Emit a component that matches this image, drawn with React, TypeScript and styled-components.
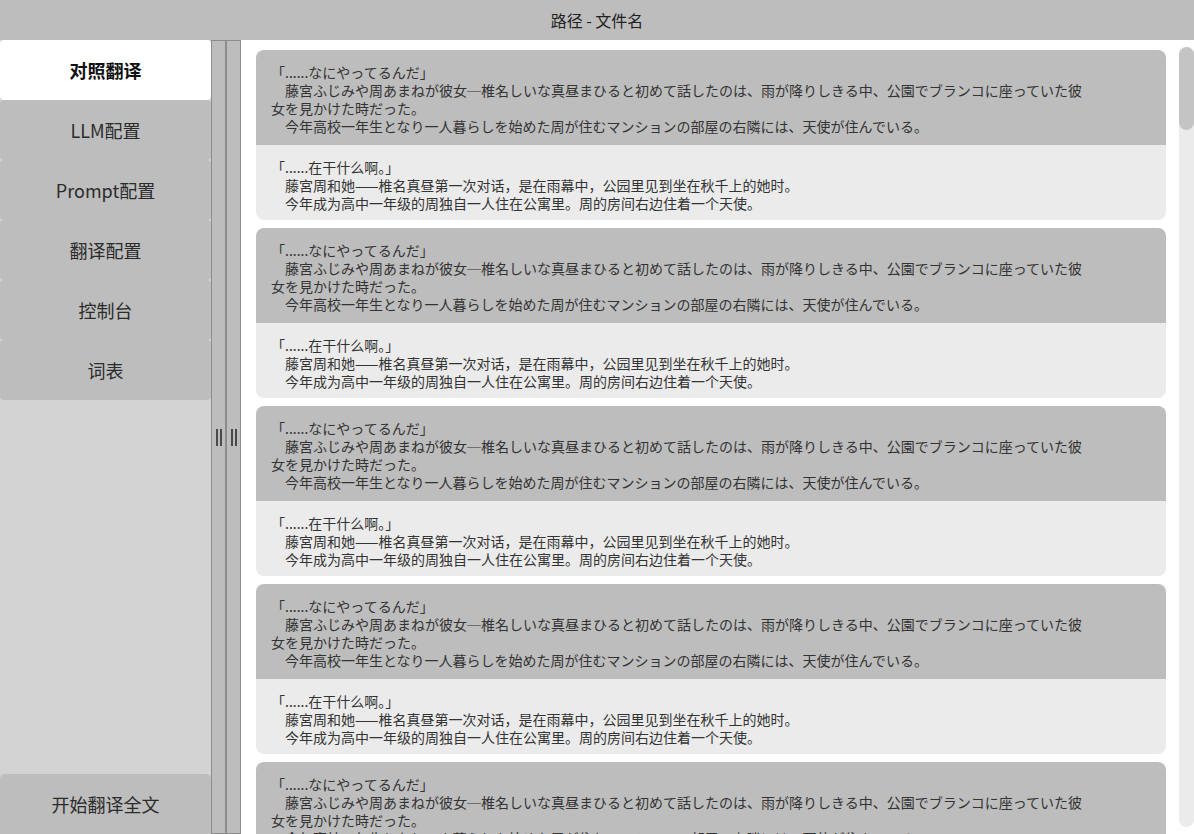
import React from "react";
import styled, { createGlobalStyle } from "styled-components";

const GlobalStyle = createGlobalStyle`
  html, body {
    margin: 0;
    padding: 0;
    height: 100%;
    overflow: hidden;
    background: #ffffff;
    font-family: "Noto Sans CJK SC", "Noto Sans CJK JP", "Noto Sans", sans-serif;
  }
  #root { height: 100%; }
  * { box-sizing: border-box; }
`;

const Shell = styled.div`
  height: 100vh;
  display: flex;
  flex-direction: column;
`;

const TitleBar = styled.header`
  height: 40px;
  flex: none;
  background: #bdbdbd;
  display: flex;
  align-items: center;
  justify-content: center;
  font-size: 16px;
  color: #222;
`;

const Body = styled.div`
  flex: 1;
  min-height: 0;
  display: flex;
`;

const Sidebar = styled.nav`
  width: 211px;
  flex: none;
  background: #d3d3d3;
  display: flex;
  flex-direction: column;
  justify-content: space-between;
`;

const NavList = styled.div`
  display: flex;
  flex-direction: column;
`;

const NavItem = styled.div<{ $active?: boolean }>`
  height: 60px;
  display: flex;
  align-items: center;
  justify-content: center;
  border-radius: 4px;
  background: ${(p) => (p.$active ? "#ffffff" : "#bdbdbd")};
  color: ${(p) => (p.$active ? "#111" : "#2b2b2b")};
  font-weight: ${(p) => (p.$active ? 700 : 400)};
  font-size: 18px;
  cursor: pointer;
`;

const StartButton = styled.button`
  height: 60px;
  border: none;
  border-radius: 5px 5px 0 0;
  background: #bdbdbd;
  color: #2b2b2b;
  font-family: inherit;
  font-size: 18px;
  cursor: pointer;
`;

const Splitter = styled.div`
  flex: none;
  display: flex;
`;

const Handle = styled.div`
  width: 15px;
  border: 1px solid #8c8c8c;
  background: #bdbdbd;
  display: flex;
  align-items: center;
  justify-content: center;
`;

const Grip = styled.span`
  width: 6px;
  height: 17px;
  border-left: 2px solid #4a4a4a;
  border-right: 2px solid #4a4a4a;
  margin-left: 1px;
`;

const ContentPane = styled.div`
  flex: 1;
  min-width: 0;
  display: flex;
`;

const List = styled.main`
  flex: 1;
  min-width: 0;
  overflow-y: auto;
  scrollbar-width: none;
  padding: 10px 13px 10px 15px;
  display: flex;
  flex-direction: column;
  gap: 8px;

  &::-webkit-scrollbar {
    display: none;
  }
`;

const ScrollTrack = styled.div`
  width: 15px;
  flex: none;
  margin: 7px 0;
  border-radius: 8px;
  background: #ebebeb;
  display: flex;
  flex-direction: column;
`;

const ScrollThumb = styled.div`
  height: 83px;
  border-radius: 8px;
  background: #c4c4c4;
`;

const Card = styled.section`
  flex: none;
  width: 910px;
  border-radius: 8px;
  overflow: hidden;
  display: flex;
  flex-direction: column;
`;

const Block = styled.div<{ $tone: "source" | "target" }>`
  background: ${(p) => (p.$tone === "source" ? "#bdbdbd" : "#ebebeb")};
  padding: ${(p) => (p.$tone === "source" ? "13px 75px 10px 15px" : "13px 75px 8px 15px")};
  font-family: ${(p) =>
    p.$tone === "source"
      ? `"Noto Sans CJK JP", "Noto Sans CJK SC", sans-serif`
      : `"Noto Sans CJK SC", "Noto Sans CJK JP", sans-serif`};
  font-size: 14px;
  line-height: 18px;
  color: #333;
`;

const Para = styled.p<{ $indent?: boolean }>`
  margin: 0;
  text-indent: ${(p) => (p.$indent ? "14px" : "0")};
`;

const source = [
  "「......なにやってるんだ」",
  "藤宮ふじみや周あまねが彼女─椎名しいな真昼まひると初めて話したのは、雨が降りしきる中、公園でブランコに座っていた彼女を見かけた時だった。",
  "今年高校一年生となり一人暮らしを始めた周が住むマンションの部屋の右隣には、天使が住んでいる。",
];

const target = [
  "「......在干什么啊。」",
  "藤宮周和她——椎名真昼第一次对话，是在雨幕中，公园里见到坐在秋千上的她时。",
  "今年成为高中一年级的周独自一人住在公寓里。周的房间右边住着一个天使。",
];

const navItems = ["对照翻译", "LLM配置", "Prompt配置", "翻译配置", "控制台", "词表"];

const cards = Array.from({ length: 42 }, (_, i) => i);

export default function App() {
  return (
    <>
      <GlobalStyle />
      <Shell>
        <TitleBar>路径 - 文件名</TitleBar>
        <Body>
          <Sidebar>
            <NavList>
              {navItems.map((label, i) => (
                <NavItem key={label} $active={i === 0}>
                  {label}
                </NavItem>
              ))}
            </NavList>
            <StartButton>开始翻译全文</StartButton>
          </Sidebar>
          <Splitter>
            <Handle>
              <Grip />
            </Handle>
            <Handle>
              <Grip />
            </Handle>
          </Splitter>
          <ContentPane>
            <List>
              {cards.map((i) => (
                <Card key={i}>
                  <Block $tone="source">
                    {source.map((line, j) => (
                      <Para key={j} $indent={j > 0}>
                        {line}
                      </Para>
                    ))}
                  </Block>
                  <Block $tone="target">
                    {target.map((line, j) => (
                      <Para key={j} $indent={j > 0}>
                        {line}
                      </Para>
                    ))}
                  </Block>
                </Card>
              ))}
            </List>
            <ScrollTrack>
              <ScrollThumb />
            </ScrollTrack>
          </ContentPane>
        </Body>
      </Shell>
    </>
  );
}
